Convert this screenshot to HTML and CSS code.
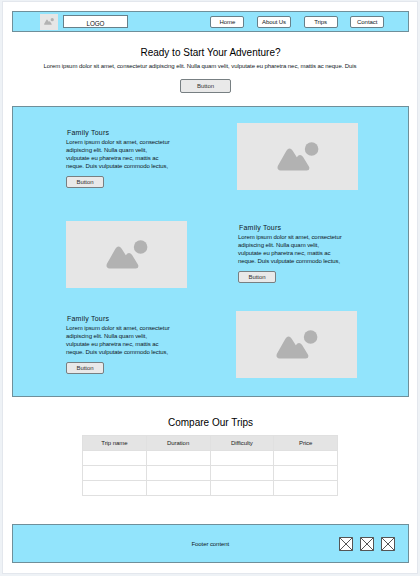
FILE: index.html
```html
<!DOCTYPE html>
<html lang="en">
<head>
<meta charset="utf-8">
<title>Adventure Trips</title>
<link rel="stylesheet" href="styles.css">
</head>
<body>
<svg class="defs" width="0" height="0">
  <symbol id="picture" viewBox="0 0 42 29">
    <path d="M.9 23.8 9.4 8.8Q12.5 4.2 15.7 8.8L19.8 15.2Q23 11 26.1 15.1L32.2 25Q33 28.5 29.8 28.5H3.5Q-.6 28.2.9 23.8Z"/>
    <circle cx="34.6" cy="7" r="6.8"/>
  </symbol>
  <symbol id="cross" viewBox="0 0 14 14">
    <path d="M.5.5h13v13H.5zM.5.5l13 13M13.5.5l-13 13"/>
  </symbol>
</svg>
<div class="page">
  <header class="bar header">
    <div class="thumb"><svg><use href="#picture"/></svg></div>
    <div class="logo">LOGO</div>
    <nav class="nav"><a>Home</a><a>About Us</a><a>Trips</a><a>Contact</a></nav>
  </header>
  <section class="hero">
    <h1>Ready to Start Your Adventure?</h1>
    <p>Lorem ipsum dolor sit amet, consectetur adipiscing elit. Nulla quam velit, vulputate eu pharetra nec, mattis ac neque. Duis</p>
    <button class="btn btn-large">Button</button>
  </section>
  <main class="bar tours">
    <article class="tour first">
      <div class="copy"><h2>Family Tours</h2><p>Lorem ipsum dolor sit amet, consectetur<br>adipiscing elit. Nulla quam velit,<br>vulputate eu pharetra nec, mattis ac<br>neque. Duis vulputate commodo lectus,</p><button class="btn">Button</button></div>
      <div class="image"><svg><use href="#picture"/></svg></div>
    </article>
    <article class="tour second">
      <div class="image"><svg><use href="#picture"/></svg></div>
      <div class="copy"><h2>Family Tours</h2><p>Lorem ipsum dolor sit amet, consectetur<br>adipiscing elit. Nulla quam velit,<br>vulputate eu pharetra nec, mattis ac<br>neque. Duis vulputate commodo lectus,</p><button class="btn">Button</button></div>
    </article>
    <article class="tour third">
      <div class="copy"><h2>Family Tours</h2><p>Lorem ipsum dolor sit amet, consectetur<br>adipiscing elit. Nulla quam velit,<br>vulputate eu pharetra nec, mattis ac<br>neque. Duis vulputate commodo lectus,</p><button class="btn">Button</button></div>
      <div class="image"><svg><use href="#picture"/></svg></div>
    </article>
  </main>
  <section class="compare">
    <h1>Compare Our Trips</h1>
    <table>
      <thead><tr><th>Trip name</th><th>Duration</th><th>Difficulty</th><th>Price</th></tr></thead>
      <tbody>
        <tr><td></td><td></td><td></td><td></td></tr>
        <tr><td></td><td></td><td></td><td></td></tr>
        <tr><td></td><td></td><td></td><td></td></tr>
      </tbody>
    </table>
  </section>
  <footer class="bar footer">
    <span>Footer content</span>
    <div class="social"><svg><use href="#cross"/></svg><svg><use href="#cross"/></svg><svg><use href="#cross"/></svg></div>
  </footer>
</div>
</body>
</html>
```
FILE: styles.css
```css
* { box-sizing: border-box; }
body { margin: 0; background: #eef2f6; font: 6px/8px "Liberation Sans", Arial, sans-serif; letter-spacing: -.08px; color: #10181c; }
.defs { display: block; height: 0; }
.page { width: 416px; height: 573px; margin: 1px 2px 2px; padding: 9px 8px 0 9px; background: #fff; border: 1px solid #e3e7ed; overflow: hidden; }
h1, h2, p { margin: 0; font-weight: 400; white-space: nowrap; }
h1 { width: 397px; font-size: 10px; line-height: 12px; letter-spacing: 0; color: #000; text-align: center; }
.bar { width: 397px; background: #92e4fc; border: 1px solid #6f8f9a; }
.header { height: 21px; display: flex; align-items: center; padding-left: 27px; }
.thumb { width: 18px; height: 16px; background: #e6e6e6; display: flex; align-items: center; justify-content: center; }
.thumb svg { width: 10px; height: 7px; fill: #b2b2b2; }
.logo { width: 65px; height: 13px; margin-left: 5px; background: #fff; border: 1px solid #66808a; text-align: center; font-size: 6.3px; line-height: 15px; color: #111; }
.nav { display: flex; gap: 12.6px; margin-left: 82.4px; }
.nav a { width: 34px; height: 12px; background: #fff; border: 1px solid #66808a; border-radius: 2px; text-align: center; line-height: 10px; }
.hero { width: 397px; height: 74px; padding-top: 15px; display: flex; flex-direction: column; align-items: center; }
.hero p { margin: 3px 0 0 -21px; }
.hero .btn-large { margin: 9px 0 0 -10px; }
.btn { display: block; width: 38px; height: 12px; padding: 0; background: #e9e9e9; border: 1px solid #777f82; border-radius: 2px; font: inherit; letter-spacing: inherit; line-height: 10px; color: #333; text-align: center; }
.btn-large { width: 51px; height: 14px; }
.tours { height: 291px; display: flex; flex-direction: column; }
.tour { display: flex; height: 67px; justify-content: space-between; }
.image { width: 121px; height: 67px; background: #e6e6e6; display: flex; align-items: center; justify-content: center; }
.image svg { width: 42px; height: 29px; fill: #b2b2b2; }
.first { width: 292px; margin: 16px 0 0 53px; }
.second { width: 280px; margin: 31px 0 0 53px; }
.third { width: 291px; margin: 23px 0 0 53px; }
.copy { width: 108px; padding-top: 5px; }
.second .copy { padding-top: 2px; }
.third .copy { padding-top: 3px; }
.copy h2 { font-size: 7px; line-height: 9px; letter-spacing: .22px; margin-left: 1px; }
.copy p { line-height: 7.8px; margin: 2.3px 0 5.2px; }
.compare { padding-top: 20px; height: 127px; }
table { width: 256px; margin: 6px 0 0 70px; border-collapse: collapse; table-layout: fixed; }
th, td { height: 15px; padding: 0; border: 1px solid #e0e0e0; }
th { background: #e4e4e4; font-weight: 400; color: #222; text-align: center; }
.footer { height: 39px; display: flex; align-items: center; justify-content: space-between; padding: 0 13.5px 0 178.5px; }
.social { display: flex; gap: 6.7px; }
.social svg { width: 14px; height: 14px; fill: #fff; stroke: #555; }
```
